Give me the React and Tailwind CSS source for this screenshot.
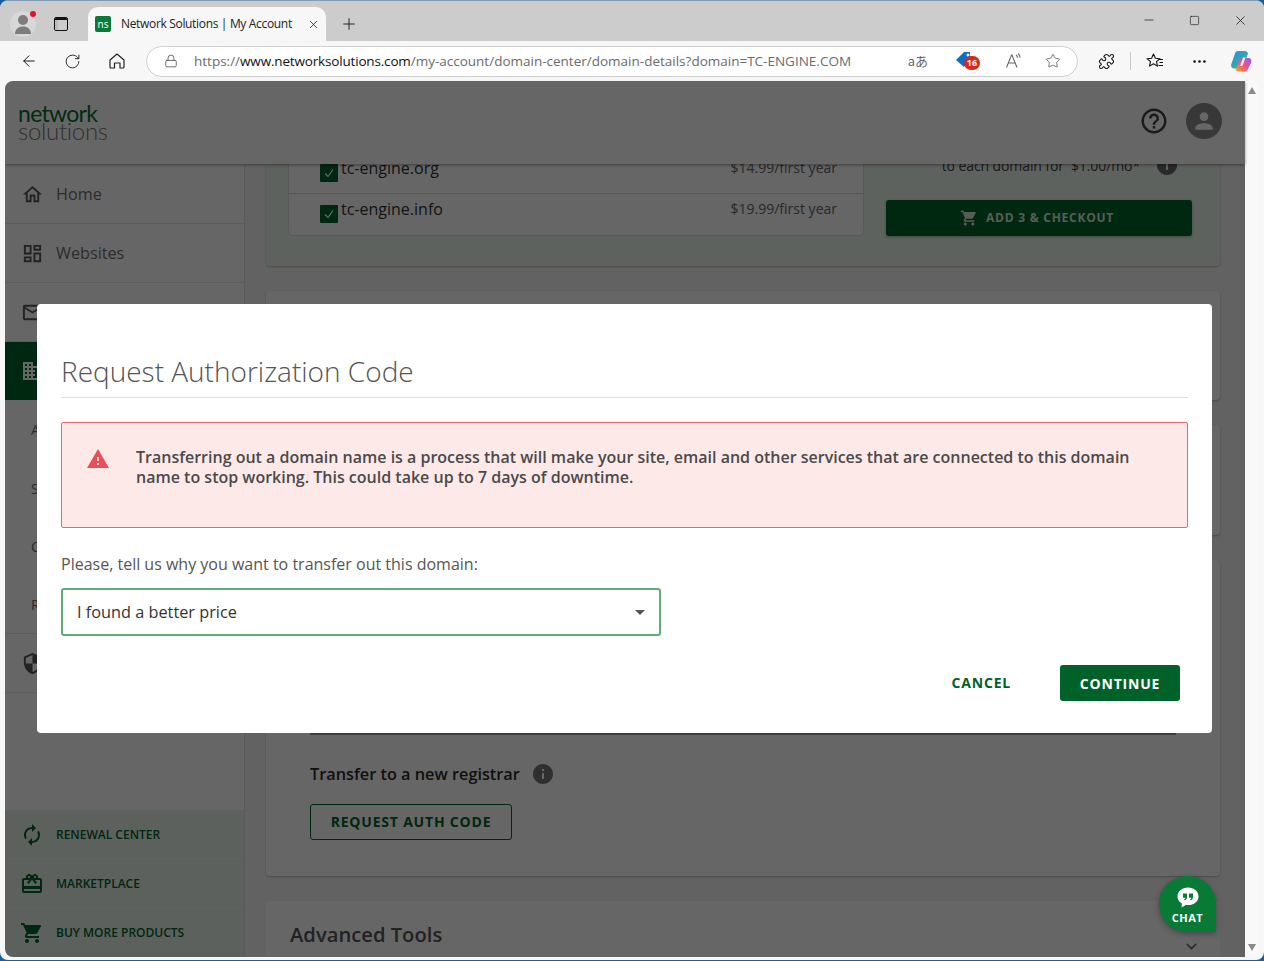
import { ArrowLeft, RotateCw, Lock, Plus, X, Minus, Square, Star, Puzzle, MoreHorizontal, ChevronDown } from 'lucide-react';
import {
  MdOutlineHome,
  MdOutlineDashboard,
  MdMailOutline,
  MdDomain,
  MdSecurity,
  MdAutorenew,
  MdOutlineCardGiftcard,
  MdShoppingCart,
  MdWarning,
  MdHelpOutline,
  MdPerson,
  MdInfo,
  MdArrowDropDown,
} from 'react-icons/md';

const font = "font-['Open_Sans',sans-serif]";

function BrowserHome() {
  return (
    <svg width="18" height="18" viewBox="0 0 18 18" fill="none" stroke="#222" strokeWidth="1.2">
      <path d="M2 8 9 2l7 6v7a1 1 0 0 1-1 1h-3v-5H6.5v5H3a1 1 0 0 1-1-1z" strokeLinejoin="round" />
    </svg>
  );
}

function FavoritesIcon() {
  return (
    <svg width="18" height="18" viewBox="0 0 18 18" fill="none" stroke="#111" strokeWidth="1.1">
      <path d="M7.5 2 9.400 6.300l4.600.4-3.500 3 1 4.400-4-2.400-4 2.400 1-4.400L1 6.700l4.600-.4z" strokeLinejoin="round" />
      <path d="M13 7.500h4M13.500 10.500h3.500M12.500 13.500h4.500" />
    </svg>
  );
}

function CopilotIcon() {
  return (
    <svg width="24" height="24" viewBox="0 0 24 24">
      <defs>
        <linearGradient id="cpA" x1="0" y1="0" x2="1" y2="1">
          <stop offset="0" stopColor="#2b8cf0" />
          <stop offset="1" stopColor="#35c46f" />
        </linearGradient>
        <linearGradient id="cpB" x1="0" y1="1" x2="1" y2="0">
          <stop offset="0" stopColor="#f7a51c" />
          <stop offset="0.5" stopColor="#f0508c" />
          <stop offset="1" stopColor="#8a5cf0" />
        </linearGradient>
      </defs>
      <path d="M9 2h7c1.600 0 2.600 1 3 2.400L14.500 17c-.5 1.700-1.800 2.500-3.300 2.500H5.500C3 19.500 1.500 17.500 2.300 15L6 4.500C6.500 3 7.500 2 9 2z" fill="url(#cpA)" />
      <path d="M13 9h6c2.600 0 4 2 3.200 4.500L19 20c-.6 1.500-1.700 2.500-3.300 2.500H9c-1.500 0-2.300-1-1.900-2.500L10 11.500C10.500 10 11.500 9 13 9z" fill="url(#cpB)" />
      <path d="M14 8.500h2.500L13.500 17H11z" fill="#fff" opacity="0.85" />
    </svg>
  );
}

function ChatIcon() {
  return (
    <svg width="22" height="21" viewBox="0 0 22 21">
      <path d="M11 0.500c5.700 0 10.500 3.800 10.500 8.900s-4.800 8.700-10.500 8.700c-.8 0-1.500 0-2.200-.2L4.500 20.500l.4-4C2.200 14.900.5 12.400.5 9.400.5 4.300 5.300.5 11 .5z" fill="#fff" />
      <path d="M6 6.500h4v3.800c0 1.600-.9 2.700-2.500 3l-.4-1c.8-.3 1.200-.8 1.300-1.500H6zM12 6.500h4v3.800c0 1.600-.9 2.700-2.500 3l-.4-1c.8-.3 1.200-.8 1.300-1.500H12z" fill="#087a35" />
    </svg>
  );
}

function Chrome() {
  return (
    <>
      <div className="flex h-[40px] items-end bg-[#cccccc] pl-[10px]">
        <div className="flex h-full items-center pt-[6px]">
          <div className="relative flex h-[26px] w-[26px] items-center justify-center rounded-full bg-[#d8d8d8]">
            <svg width="18" height="22" viewBox="0 0 18 22" fill="#7d7d7d">
              <circle cx="9" cy="7" r="5" />
              <path d="M1 21c0-5 3.500-7.500 8-7.500s8 2.500 8 7.500z" />
            </svg>
            <span className="absolute top-0 right-0 h-[6px] w-[6px] rounded-full bg-[#e81123]" />
          </div>
          <div className="ml-[18px] flex h-[14px] w-[14px] flex-col overflow-hidden rounded-[2px] border-[1.500px] border-[#111]">
            <div className="h-[2px] bg-[#111]" />
            <div className="w-[3px] flex-1 bg-[#bbb]" />
          </div>
        </div>
        <div className="ml-[20px] flex h-[34px] w-[238px] items-center rounded-t-[10px] bg-[#f7f7f7] pl-[7px]">
          <div className="flex h-[16px] w-[16px] items-center justify-center rounded-[2px] bg-[#0a7a3a] text-[10px] leading-none text-white">
            ns
          </div>
          <span className="ml-[10px] font-['Open_Sans',sans-serif] text-[12px] tracking-[-0.33px] whitespace-nowrap text-[#222]">
            Network Solutions | My Account
          </span>
          <X className="ml-[15px]" size={13} strokeWidth={1.5} color="#222" />
        </div>
        <div className="flex h-full items-center pt-[6px] pl-[14px]">
          <Plus size={18} strokeWidth={1.2} color="#111" />
        </div>
        <div className="ml-auto flex h-full items-center gap-[33px] pr-[16px] pb-[2px]">
          <Minus size={14} strokeWidth={1.2} color="#111" />
          <Square size={11} strokeWidth={1.3} color="#111" />
          <X size={15} strokeWidth={1.2} color="#111" />
        </div>
      </div>
      <div className="flex h-[40px] items-center bg-[#f7f7f7] pl-[20px]">
        <ArrowLeft size={18} strokeWidth={1.3} color="#111" />
        <RotateCw className="ml-[26px]" size={17} strokeWidth={1.3} color="#222" />
        <div className="ml-[27px]">
          <BrowserHome />
        </div>
        <div className="ml-[20px] flex h-[31px] w-[932px] items-center rounded-full border border-[#cfcfcf] bg-white pl-[17px]">
          <Lock size={14} strokeWidth={1.3} color="#444" />
          <span className="ml-[16px] font-['Open_Sans',sans-serif] text-[13.500px] whitespace-nowrap text-[#6b6b6b]">
            https://<span className="tracking-[-0.17px] text-[#111]">www.networksolutions.com</span>/my-account/domain-center/domain-details?domain=TC-ENGINE.COM
          </span>
          <span className="ml-auto font-['Noto_Sans_CJK_JP',sans-serif] text-[13px] text-[#666]">aあ</span>
          <div className="relative ml-[27px] h-[20px] w-[24px]">
            <svg width="18" height="18" viewBox="0 0 18 18">
              <path d="M9 1h6v7l-6 8-8-7z" fill="#0f6fc6" />
              <circle cx="13" cy="4" r="1.500" fill="#fff" />
            </svg>
            <span className="absolute top-[5px] left-[9px] flex h-[14px] w-[16px] items-center justify-center rounded-full bg-[#d6281f] font-['Open_Sans',sans-serif] text-[9px] font-bold text-white">
              16
            </span>
          </div>
          <svg className="ml-[26px]" width="18" height="18" viewBox="0 0 18 18" fill="none" stroke="#666" strokeWidth="1.100">
            <path d="M1.500 15.500 6.500 3h.5l5 12.500M3.500 11h7" />
            <path d="M11 3c1 .8 1.500 1.700 1.500 2.800M13 1.500c1.400 1.200 2 2.600 2 4.300" />
          </svg>
          <Star className="ml-[22px] mr-[16px]" size={16} strokeWidth={1.2} color="#555" />
        </div>
        <Puzzle className="ml-[20px]" size={17} strokeWidth={1.5} color="#111" />
        <div className="mx-[15px] h-[18px] w-px bg-[#c8c8c8]" />
        <FavoritesIcon />
        <MoreHorizontal className="ml-[27px]" size={17} strokeWidth={1.800} color="#111" />
        <div className="ml-[21px]">
          <CopilotIcon />
        </div>
      </div>
    </>
  );
}

function SideItem({ icon: Icon, label, first }) {
  return (
    <div className={`flex items-center border-b border-[#e6e6e6] pl-[16px] ${first ? 'h-[60px] pt-[1px]' : 'h-[59px]'}`}>
      <Icon size={23} color="#555" />
      <span className="ml-[12px] text-[16.200px] text-[#6f6f6f]">{label}</span>
    </div>
  );
}

function SubItem({ label, border }) {
  return (
    <div className={`flex h-[58.500px] items-center pt-[1px] pl-[26px] text-[14px] text-[#6f6f6f] ${border ? 'border-b border-[#e6e6e6]' : ''}`}>
      {label}
    </div>
  );
}

function BottomItem({ icon: Icon, label }) {
  return (
    <div className="flex h-[49px] items-center border-b border-[#f0f8f0] pt-[1px] pl-[15px] last:border-b-0">
      <Icon size={24} color="#006228" />
      <span className="ml-[12px] text-[12px] font-semibold text-[#006228]">{label}</span>
    </div>
  );
}

function Sidebar() {
  return (
    <aside className="flex w-[240px] shrink-0 flex-col border-r border-[#e2e2e2] bg-white">
      <SideItem icon={MdOutlineHome} label="Home" first />
      <SideItem icon={MdOutlineDashboard} label="Websites" />
      <SideItem icon={MdMailOutline} label="" />
      <div className="flex h-[58px] items-center bg-[#006228] pl-[16px]">
        <MdDomain size={24} color="#fff" />
      </div>
      <SubItem label="All" />
      <SubItem label="SSL" />
      <SubItem label="CDN" />
      <SubItem label="RDAP" border />
      <SideItem icon={MdSecurity} label="" />
      <div className="mt-auto bg-[#e6f2e8]">
        <BottomItem icon={MdAutorenew} label="RENEWAL CENTER" />
        <BottomItem icon={MdOutlineCardGiftcard} label="MARKETPLACE" />
        <BottomItem icon={MdShoppingCart} label="BUY MORE PRODUCTS" />
      </div>
    </aside>
  );
}

function DomainRow({ name, price, divider }) {
  return (
    <div className={`flex h-[41px] items-start pt-[3px] pr-[26px] pl-[31px] ${divider ? 'border-b border-[#d9d9d9]' : ''}`}>
      <div className="mt-[8px] flex h-[18px] w-[18px] items-center justify-center rounded-[1px] bg-[#006228]">
        <svg width="12" height="12" viewBox="0 0 12 12" fill="none" stroke="#fff" strokeWidth="1.200">
          <path d="m2 6.500 3 3 5-7" />
        </svg>
      </div>
      <span className="ml-[3px] text-[16px] leading-[24px] text-[#333]">{name}</span>
      <span className="ml-auto text-[14px] leading-[24px] text-[#666]">{price}</span>
    </div>
  );
}

function Main() {
  return (
    <main className="flex-1 overflow-hidden bg-[#f5f5f5]">
      <div className="-mt-[30px] flex flex-col gap-[25px] pr-[25px] pl-[21px]">
        <section className="flex h-[132px] items-start gap-[22px] rounded-[4px] bg-[#eaf5ec] pt-[18px] pl-[22px] shadow-[0_1px_2px_rgba(0,0,0,0.25)]">
          <div className="w-[576px] rounded-[6px] border border-[#dcdcdc] bg-white">
            <DomainRow name="tc-engine.org" price="$14.99/first year" divider />
            <DomainRow name="tc-engine.info" price="$19.99/first year" />
          </div>
          <div className="w-[306px]">
            <div className="flex h-[26px] items-center justify-end gap-[15px] pr-[13px] text-[14px] tracking-[-0.1px] whitespace-nowrap text-[#444]">
              <span>to each domain for &nbsp;$1.00/mo*</span>
              <MdInfo size={24} color="#666" />
            </div>
            <button className="mt-[22px] flex h-[36px] w-full items-center justify-center gap-[8px] rounded-[3px] bg-[#006228] pr-[4px] text-[12px] font-bold tracking-[0.75px] text-[#d8e8dc] shadow-[0_1px_3px_rgba(0,0,0,0.3)]">
              <MdShoppingCart size={18} />
              ADD 3 &amp; CHECKOUT
            </button>
          </div>
        </section>
        <section className="h-[109px] rounded-[4px] bg-white shadow-[0_1px_2px_rgba(0,0,0,0.25)]" />
        <section className="h-[110px] rounded-[4px] bg-white shadow-[0_1px_2px_rgba(0,0,0,0.25)]" />
        <section className="h-[316px] rounded-[4px] bg-white px-[44px] shadow-[0_1px_2px_rgba(0,0,0,0.25)]">
          <div className="h-[175px] border-b-2 border-[#999]" />
          <div className="mt-[27px] flex items-center gap-[11px]">
            <span className="text-[16.300px] leading-[24px] font-semibold text-[#2b2b2b]">Transfer to a new registrar</span>
            <MdInfo size={24} color="#777" />
          </div>
          <button className="mt-[18px] flex h-[36px] w-[202px] items-center justify-center rounded-[3px] border border-[#006228] pb-[2px] text-[14px] font-bold tracking-[0.8px] text-[#006228]">
            REQUEST AUTH CODE
          </button>
        </section>
        <section className="relative h-[80px] rounded-[4px] bg-white pt-[18px] pl-[24px]">
          <h2 className="text-[20.200px] font-semibold text-[#555]">Advanced Tools</h2>
          <ChevronDown className="absolute top-[37px] right-[20px]" size={17} strokeWidth={2} color="#666" />
        </section>
      </div>
    </main>
  );
}

function Modal() {
  return (
    <div className="h-[429px] w-[1175px] rounded-[4px] bg-white px-[24px] pt-[47px] text-[#555]">
      <h1 className="border-b border-[#dfdfdf] pb-[6px] text-[28px] leading-[40px] font-light text-[#555]">
        Request Authorization Code
      </h1>
      <div className="mt-[24px] flex h-[106px] rounded-[2px] border border-[#e8666d] bg-[#fee9e9] pt-[24px] pl-[24px]">
        <MdWarning className="shrink-0" size={24} color="#ec4e56" />
        <p className="ml-[26px] w-[1010px] text-[16px] leading-[20px] font-semibold text-[#4a4a4a]">
          Transferring out a domain name is a process that will make your site, email and other services that are connected to this domain name to stop working. This could take up to 7 days of downtime.
        </p>
      </div>
      <p className="mt-[24px] text-[16px] leading-[24px] text-[#555]">Please, tell us why you want to transfer out this domain:</p>
      <div className="mt-[12px] flex h-[48px] w-[600px] items-center justify-between rounded-[3px] border-2 border-[#5fae78] pr-[7px] pl-[14px] text-[#333]">
        <span className="text-[16.300px]">I found a better price</span>
        <MdArrowDropDown size={24} color="#555" />
      </div>
      <div className="mt-[29px] flex items-center justify-end gap-[49px] pr-[8px]">
        <button className="pb-[2px] text-[14px] font-bold tracking-[0.8px] text-[#006228]">CANCEL</button>
        <button className="h-[36px] w-[120px] rounded-[3px] bg-[#006228] text-[14px] font-bold tracking-[0.8px] text-white">CONTINUE</button>
      </div>
    </div>
  );
}

export default function App() {
  return (
    <div className={`h-[961px] w-[1264px] overflow-hidden bg-[#1b5d9c] ${font}`}>
      <div className="flex h-[960px] flex-col overflow-hidden rounded-[8px] border-t border-[#7f9db5] bg-[#f7f7f7]">
        <Chrome />
        <div className="mr-[6px] ml-[5px] flex h-[876px] overflow-hidden rounded-[8px] bg-white">
          <div className="relative flex w-[1240px] shrink-0 flex-col">
            <header className="relative z-10 flex h-[83px] shrink-0 items-center bg-white pr-[23px] pb-[4px] pl-[13px] shadow-[0_1px_3px_rgba(0,0,0,0.4)]">
              <div className="mt-[2px] flex flex-col leading-[17px]">
                <span className="font-['Lato',sans-serif] text-[23px] font-normal tracking-[-0.7px] text-[#00702f]">network</span>
                <span className="font-['Lato',sans-serif] text-[24px] font-light tracking-[-0.3px] text-[#777]">solutions</span>
              </div>
              <MdHelpOutline className="ml-auto" size={30} color="#444" />
              <div className="ml-[17px] flex h-[36px] w-[36px] items-center justify-center rounded-full bg-[#8c8c8c]">
                <MdPerson size={26} color="#fff" />
              </div>
            </header>
            <div className="flex min-h-0 flex-1">
              <Sidebar />
              <Main />
            </div>
            <div className="absolute inset-0 z-20 flex justify-center bg-black/60 pt-[223px] pr-px">
              <Modal />
            </div>
            <div className="absolute top-[795px] left-[1154px] z-30 flex h-[56px] w-[57px] flex-col items-center rounded-t-full rounded-bl-full bg-[#087a35] pt-[11px] shadow-[0_2px_6px_rgba(0,0,0,0.3)]">
              <ChatIcon />
              <span className="mt-[3px] text-[11px] leading-[14px] font-bold tracking-[0.5px] text-white">CHAT</span>
            </div>
          </div>
          <div className="flex w-[13px] flex-col items-center justify-between bg-[#f9f9f9] py-[6px]">
            <div className="h-0 w-0 border-x-[4px] border-b-[7px] border-x-transparent border-b-[#8a8a8a]" />
            <div className="h-0 w-0 border-x-[4px] border-t-[7px] border-x-transparent border-t-[#8a8a8a]" />
          </div>
        </div>
      </div>
    </div>
  );
}
